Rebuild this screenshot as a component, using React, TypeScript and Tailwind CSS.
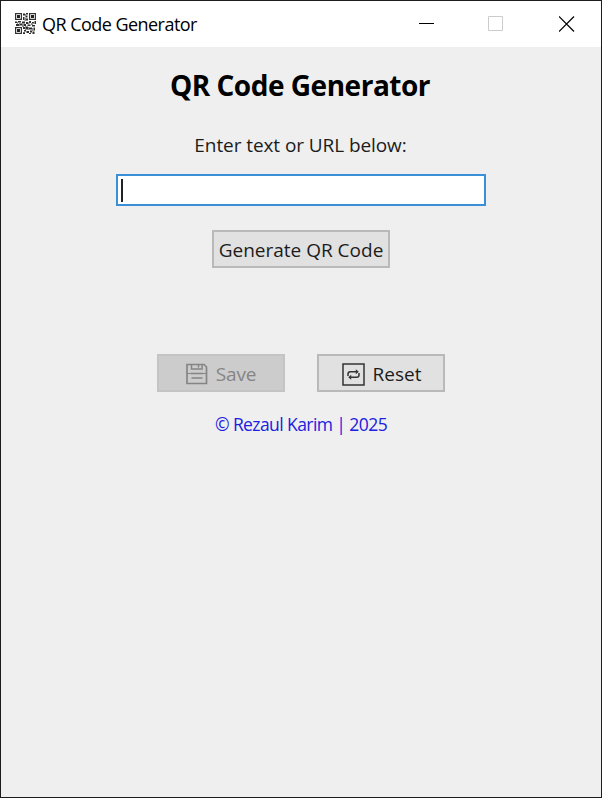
import React from "react";

function Finder({ x, y }: { x: number; y: number }) {
  return (
    <g>
      <rect x={x + 0.6} y={y + 0.6} width="5.8" height="5.8" fill="#fff" stroke="#333" strokeWidth="1.2" />
      <rect x={x + 2} y={y + 2} width="3" height="3" fill="#222" />
    </g>
  );
}

function QrIcon() {
  return (
    <svg className="h-[21px] w-[21px]" viewBox="0 0 21 21">
      <Finder x={0} y={0} />
      <Finder x={14} y={0} />
      <Finder x={0} y={14} />
      <path
        d="M8 0.500h2v2h-2zM11 0h2v1.500h-2zM10.500 2.500h2v2h-2zM8 4h1.500v3H8zM11 5.500h2v2h-2zM0 8.500h2v1.500H0zM3 8h3v1.500H3zM1 11h3v2H1zM5 10.500h2v2H5zM7 8.500h3v2H7zM11 9h2v2h-2zM9 11h2v2H9zM14 8h2v2h-2zM17 9h2v1.500h-2zM19.500 8H21v3h-1.500zM12.500 11.500h3v1.500h-3zM17 12h3v1.500h-3zM8 14h2v2H8zM11 13.500h2v3h-2zM14 14.500h3v2h-3zM18.500 14.500H20v3h-1.500zM9 17h2v1.500H9zM8 19.300h2V21H8zM12 18h2v2h-2zM15 17.500h2v2h-2zM17.500 18.500h2V21h-2zM14 20h2v1h-2z"
        fill="#2e2e2e"
      />
      <path
        d="M10 1h1v3h-1zM9.500 5h1.500v3H9.500zM2 9h1v2H2zM7 11h2v3H7zM13 9.500h1.500v2H13zM16 10h2v2h-2zM10 13h1v4h-1zM13 14h1v3h-1zM17 15h1.500v3H17zM11 18h1v2h-1zM4 10h1v3H4z"
        fill="#8a8a8a"
      />
    </svg>
  );
}

function SaveIcon() {
  return (
    <svg className="h-[22px] w-[22px]" viewBox="0 0 22 22" fill="none" stroke="#858585" strokeWidth="1.7">
      <path d="M1 1.500h17l2.500 2.500v16.500H1z" />
      <path d="M5.500 1.500v4.500h10.600V1.500M12.500 2v2.500M4.500 10.500h12.500M5.500 15h11" strokeWidth="1.5" />
      <path d="M1 10.500h3.500M17 10.500h3.500" strokeWidth="1" />
    </svg>
  );
}

function ResetIcon() {
  return (
    <svg className="h-[23px] w-[23px]" viewBox="0 0 23 23" fill="none" stroke="#333">
      <rect x="1" y="1" width="21" height="21" strokeWidth="1.5" />
      <path d="M6 13v-2q0-2.300 2.300-2.300h6M17 10v2q0 2.300-2.300 2.300h-6" strokeWidth="1.5" />
      <path d="M13.800 6.200l3 2.500-3 2.500zM9.200 11.800l-3 2.500 3 2.500z" fill="#333" stroke="none" />
    </svg>
  );
}

export default function App() {
  return (
    <div className="flex h-[798px] w-[602px] flex-col overflow-hidden border border-[#1d1b1e] bg-[#efefef] font-['Open_Sans','Noto_Sans',sans-serif] text-[#1c1c1c]">
      <header className="flex h-[46px] shrink-0 items-center bg-white pl-[14px] text-black">
        <div className="-mt-[2px]">
          <QrIcon />
        </div>
        <span className="ml-[6px] whitespace-nowrap text-[18px] leading-6 tracking-[-0.54px]">QR Code Generator</span>
        <div className="ml-auto flex items-center pr-[26px]">
          <svg className="h-4 w-4" viewBox="0 0 16 16" stroke="#000">
            <path d="M0 7.500h15" />
          </svg>
          <svg className="ml-[53px] h-4 w-4" viewBox="0 0 16 16" fill="none" stroke="#ccc">
            <path d="M.5 .5h14v14H.5z" />
          </svg>
          <svg className="ml-[55px] h-4 w-4" viewBox="0 0 16 16" stroke="#000" strokeWidth="1.2">
            <path d="M0 .5l15 15M15 .5l-15 15" />
          </svg>
        </div>
      </header>
      <main className="flex flex-col items-center">
        <h1 className="mt-[20px] whitespace-nowrap pr-[2px] text-[28px] font-bold leading-9 tracking-[-0.48px] text-black">QR Code Generator</h1>
        <p className="mt-[28px] whitespace-nowrap pr-px text-[19px] leading-7 tracking-[-0.08px]">Enter text or URL below:</p>
        <div className="mt-[15px] flex h-[32px] w-[370px] items-center border-2 border-[#3a8fd8] bg-white pl-[3px]">
          <span className="h-[23px] w-[1.5px] bg-[#222]" />
        </div>
        <button className="mt-[24px] flex h-[38px] w-[178px] items-center justify-center whitespace-nowrap border-2 border-[#b9b9b9] bg-[#e1e1e1] pt-[3px] text-[19px]">
          Generate QR Code
        </button>
        <div className="mt-[86px] flex gap-[32px]">
          <button className="flex h-[38px] w-[128px] items-center justify-center gap-[8px] border-2 border-[#c4c4c4] bg-[#cccccc] pt-[2px] text-[19px] text-[#858585]">
            <SaveIcon />
            <span className="pt-px tracking-[-0.2px]">Save</span>
          </button>
          <button className="flex h-[38px] w-[128px] items-center justify-center gap-[8px] border-2 border-[#b9b9b9] bg-[#e1e1e1] pt-[2px] pl-px text-[19px]">
            <ResetIcon />
            <span className="pt-px">Reset</span>
          </button>
        </div>
        <p className="mt-[20px] whitespace-nowrap text-[17.5px] leading-6 tracking-[-0.58px] text-[#2020e0]">© Rezaul Karim | 2025</p>
      </main>
    </div>
  );
}
